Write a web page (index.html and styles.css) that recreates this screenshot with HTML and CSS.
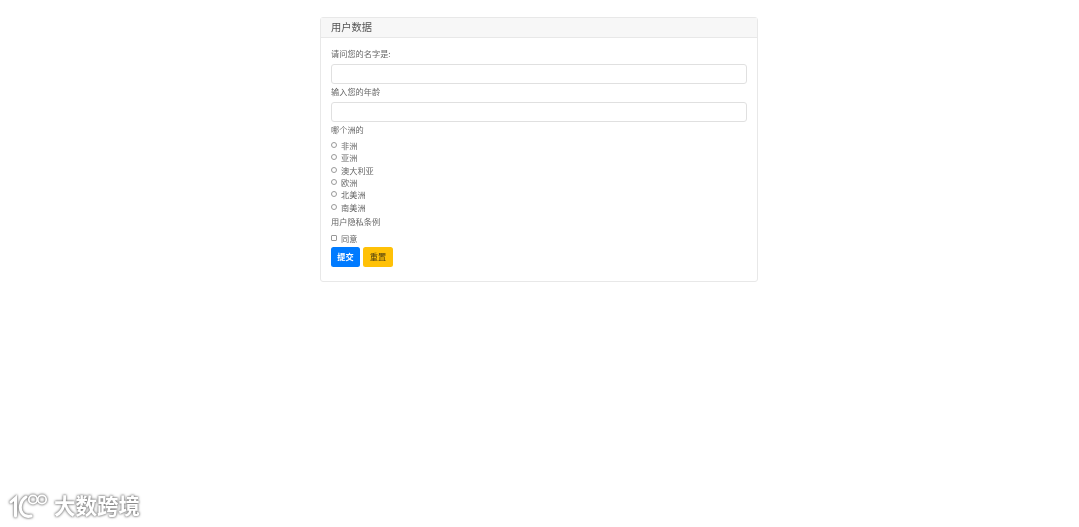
FILE: index.html
```html
<!DOCTYPE html>
<html lang="zh">
<head>
<meta charset="utf-8">
<title>用户数据</title>
<link rel="stylesheet" href="styles.css">
</head>
<body>
<main class="card">
  <h1 class="card-header">用户数据</h1>
  <form class="card-body">
    <label class="field-label" for="name">请问您的名字是:</label>
    <input class="text-input" id="name" type="text">
    <label class="field-label" for="age">输入您的年龄</label>
    <input class="text-input" id="age" type="text">
    <div class="field-label">哪个洲的</div>
    <div class="choices">
      <label class="choice"><input type="radio" name="c"><span>非洲</span></label>
      <label class="choice"><input type="radio" name="c"><span>亚洲</span></label>
      <label class="choice"><input type="radio" name="c"><span>澳大利亚</span></label>
      <label class="choice"><input type="radio" name="c"><span>欧洲</span></label>
      <label class="choice"><input type="radio" name="c"><span>北美洲</span></label>
      <label class="choice"><input type="radio" name="c"><span>南美洲</span></label>
    </div>
    <div class="field-label terms">用户隐私条例</div>
    <label class="choice agree"><input type="checkbox"><span>同意</span></label>
    <div class="actions">
      <button class="btn btn-primary" type="submit">提交</button>
      <button class="btn btn-warning" type="reset">重置</button>
    </div>
  </form>
</main>
<div class="watermark">
  <svg class="wm-logo" width="40" height="28" viewBox="0 0 40 28" fill="none" stroke="#fff" stroke-width="3" stroke-linecap="round">
    <path d="M2 11 L6.500 7 V25"/>
    <path d="M17 6 C11 10 10 18 13 22 C15 25 18 26 22 25"/>
    <circle cx="24" cy="8.500" r="4.200" stroke-width="1.800"/>
    <circle cx="33" cy="8.500" r="4.200" stroke-width="1.800"/>
  </svg>
  <span class="wm-text">大数跨境</span>
</div>
</body>
</html>
```
FILE: styles.css
```css
* { box-sizing: border-box; }
html, body { margin: 0; height: 100%; }
body {
  padding-top: 17px;
  background: #fff;
  color: #212529;
  font-family: "Noto Sans CJK SC", "Liberation Sans", sans-serif;
  font-size: 8.2px;
  overflow: hidden;
}
.card {
  width: 438px;
  height: 265px;
  margin-left: 320px;
  border: 1px solid #e8e8e8;
  border-radius: 3px;
  filter: blur(0.4px);
}
.card-header {
  margin: 0;
  height: 20px;
  padding: 0 10px;
  background: #f7f7f7;
  border-bottom: 1px solid #e8e8e8;
  font-size: 10.25px;
  font-weight: 400;
  line-height: 18px;
  color: #555;
}
.card-body {
  display: flex;
  flex-direction: column;
  align-items: flex-start;
  padding: 11px 10px 0;
}
.field-label {
  display: block;
  height: 15px;
  line-height: 8px;
  color: #666;
}
.text-input {
  display: block;
  width: 416px;
  height: 20px;
  margin-bottom: 3px;
  border: 1px solid #e0e0e0;
  border-radius: 3px;
  background: #fff;
}
.choices { display: flex; flex-direction: column; }
.choice {
  display: flex;
  align-items: center;
  height: 12.33px;
  padding-bottom: 2px;
  line-height: 10px;
  color: #666;
}
.choice input {
  appearance: none;
  width: 6px;
  height: 6px;
  margin: 0 4px 0 0;
  background: #fff;
  border: 0.75px solid #999;
}
.choice input[type="radio"] { border-radius: 50%; }
.choice input[type="checkbox"] { border-radius: 1px; }
.terms { margin-top: 3px; height: 16px; }
.agree { height: 12px; }
.actions { display: flex; gap: 3px; margin-top: 2px; }
.btn {
  height: 20px;
  padding: 0 0 2px;
  border: 1px solid transparent;
  border-radius: 2.5px;
  font: inherit;
  font-weight: 700;
  line-height: 14px;
}
.btn-primary { width: 29px; background: #007bff; color: #fff; }
.btn-warning { width: 30px; background: #ffc107; color: #4a3c10; font-weight: 400; }
.watermark {
  position: absolute;
  left: 9px;
  top: 491px;
  display: flex;
  align-items: center;
  gap: 5px;
  filter: drop-shadow(0 0 1px #777) drop-shadow(0 0 1px #aaa);
}
.wm-logo { display: block; }
.wm-text {
  color: #fff;
  font-size: 21.5px;
  font-weight: 700;
  line-height: 28px;
}
```
